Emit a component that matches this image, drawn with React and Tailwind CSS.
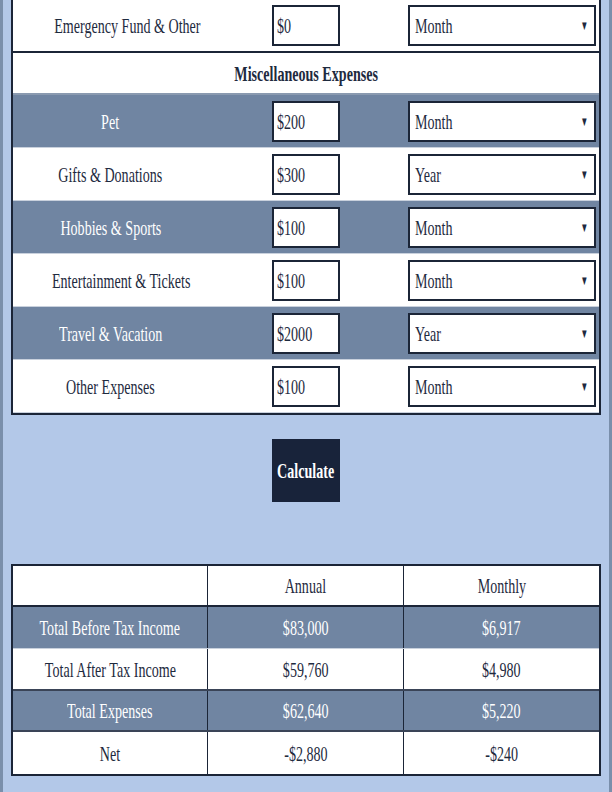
import React from 'react'

const expenses = [
  { label: 'Pet', value: '$200', period: 'Month' },
  { label: 'Gifts & Donations', value: '$300', period: 'Year' },
  { label: 'Hobbies & Sports', value: '$100', period: 'Month' },
  { label: 'Entertainment & Tickets', value: '$100', period: 'Month' },
  { label: 'Travel & Vacation', value: '$2000', period: 'Year' },
  { label: 'Other Expenses', value: '$100', period: 'Month' },
]

const results = [
  { label: 'Total Before Tax Income', annual: '$83,000', monthly: '$6,917' },
  { label: 'Total After Tax Income', annual: '$59,760', monthly: '$4,980' },
  { label: 'Total Expenses', annual: '$62,640', monthly: '$5,220' },
  { label: 'Net', annual: '-$2,880', monthly: '-$240' },
]

function Narrow({ children, left }) {
  return (
    <span className={`inline-block whitespace-nowrap scale-x-[0.64] ${left ? 'origin-left' : 'origin-center'}`}>
      {children}
    </span>
  )
}

function Field({ value }) {
  return (
    <div className="w-[68px] h-[41px] bg-white border-2 border-[#1b2537] flex items-center pl-[3px] text-[#1e2a3e]">
      <Narrow left>{value}</Narrow>
    </div>
  )
}

function Period({ value }) {
  return (
    <div className="w-[188px] h-[41px] bg-white border-2 border-[#1b2537] flex items-center justify-between pl-[5px] pr-[3px] text-[#1e2a3e]">
      <Narrow left>{value}</Narrow>
      <span className="inline-block text-[13px] leading-none scale-x-[0.6]">▼</span>
    </div>
  )
}

function ExpenseRow({ label, value, period, shaded }) {
  return (
    <div
      className={`grid grid-cols-[195px_196px_1fr] items-center h-[53px] border-b border-[#c9d1dd] ${
        shaded ? 'bg-[#7085a2] text-white' : 'bg-white text-[#1e2a3e]'
      }`}
    >
      <div className="text-center">
        <Narrow>{label}</Narrow>
      </div>
      <div className="flex justify-center">
        <Field value={value} />
      </div>
      <div className="flex justify-center">
        <Period value={period} />
      </div>
    </div>
  )
}

export default function App() {
  return (
    <div className="w-[612px] min-h-[792px] bg-[#b3c8e8] border-l-[3px] border-r-[3px] border-[#7a8fab] px-[8px] pb-[18px] font-['Liberation_Serif',serif] text-[22px]">
      <div className="bg-white border-x-2 border-b-2 border-[#1b2537]">
        <div className="grid grid-cols-[195px_196px_1fr] items-center h-[51px] bg-white text-[#1e2a3e]">
          <div className="text-center">
            <Narrow>Emergency Fund &amp; Other</Narrow>
          </div>
          <div className="flex justify-center">
            <Field value="$0" />
          </div>
          <div className="flex justify-center">
            <Period value="Month" />
          </div>
        </div>
        <div className="h-[2px] bg-[#1b2537]" />
        <div className="h-[42px] flex items-center justify-center border-b-2 border-[#8a9ab0] font-bold text-[#1e2a3e]">
          <Narrow>Miscellaneous Expenses</Narrow>
        </div>
        {expenses.map((e, i) => (
          <ExpenseRow key={e.label} {...e} shaded={i % 2 === 0} />
        ))}
      </div>

      <div className="flex justify-center mt-[24px]">
        <button className="w-[68px] h-[63px] bg-[#18233a] text-white font-bold flex items-center justify-center">
          <Narrow>Calculate</Narrow>
        </button>
      </div>

      <div className="mt-[62px] bg-white border-2 border-[#1b2537]">
        <div className="grid grid-cols-[195px_196px_1fr] h-[41px] items-center text-[#1e2a3e] border-b-2 border-[#1b2537]">
          <div className="h-full border-r border-[#1b2537]" />
          <div className="h-full flex items-center justify-center border-r border-[#1b2537]">
            <Narrow>Annual</Narrow>
          </div>
          <div className="text-center">
            <Narrow>Monthly</Narrow>
          </div>
        </div>
        {results.map((r, i) => (
          <div
            key={r.label}
            className={`grid grid-cols-[195px_196px_1fr] ${i === 2 ? 'h-[41px]' : 'h-[42px]'} ${
              i < results.length - 1 ? (i === 0 ? 'border-b border-[#c9d1dd]' : 'border-b-2 border-[#3a4457]') : ''
            } ${i % 2 === 0 ? 'bg-[#7085a2] text-white' : 'bg-white text-[#1e2a3e]'}`}
          >
            <div className="flex items-center justify-center border-r border-[#1b2537]">
              <Narrow>{r.label}</Narrow>
            </div>
            <div className="flex items-center justify-center border-r border-[#1b2537]">
              <Narrow>{r.annual}</Narrow>
            </div>
            <div className="flex items-center justify-center">
              <Narrow>{r.monthly}</Narrow>
            </div>
          </div>
        ))}
      </div>
    </div>
  )
}
